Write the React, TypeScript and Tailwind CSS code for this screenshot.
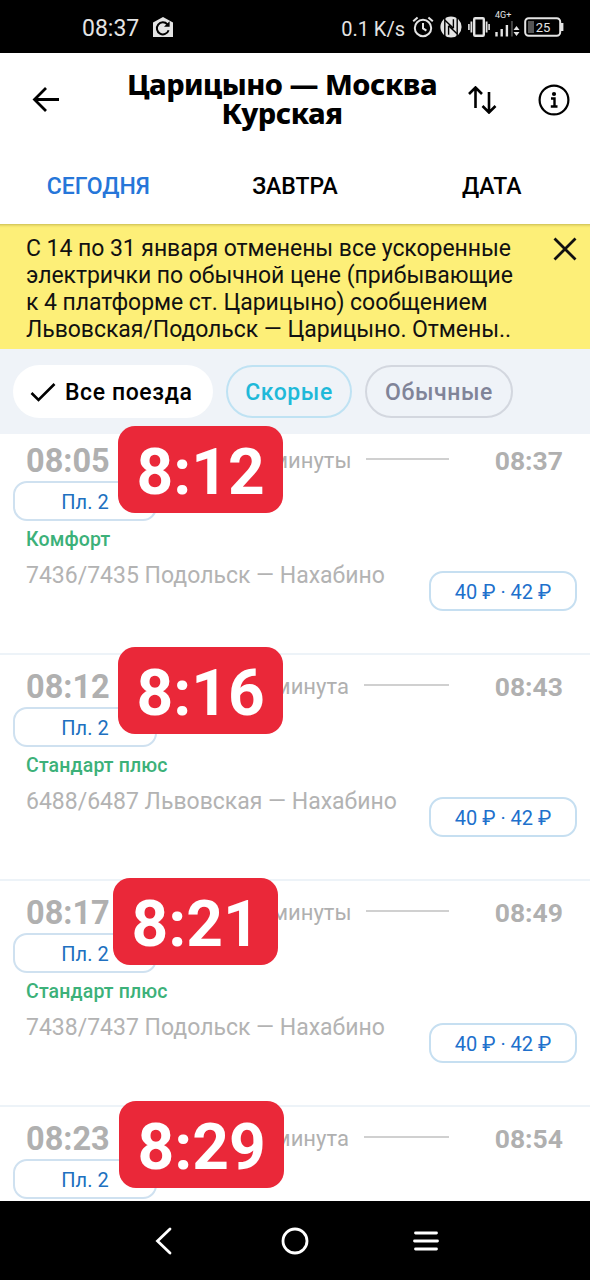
import { useState } from "react";

type Train = {
  departure: string;
  arrival: string;
  duration: string;
  kind?: string;
  route?: string;
  late: string;
  badge: string;
};

const TRAINS: Train[] = [
  {
    departure: "08:05",
    arrival: "08:37",
    duration: "32 минуты",
    kind: "Комфорт",
    route: "7436/7435 Подольск — Нахабино",
    late: "8:12",
    badge: "left-[118px] -top-[3px]",
  },
  {
    departure: "08:12",
    arrival: "08:43",
    duration: "31 минута",
    kind: "Стандарт плюс",
    route: "6488/6487 Львовская — Нахабино",
    late: "8:16",
    badge: "left-[118px] -top-[8px]",
  },
  {
    departure: "08:17",
    arrival: "08:49",
    duration: "32 минуты",
    kind: "Стандарт плюс",
    route: "7438/7437 Подольск — Нахабино",
    late: "8:21",
    badge: "left-[113px] -top-[3px]",
  },
  {
    departure: "08:23",
    arrival: "08:54",
    duration: "31 минута",
    late: "8:29",
    badge: "left-[119px] -top-[6px]",
  },
];

function StatusBar() {
  return (
    <div className="flex h-[53px] shrink-0 items-center bg-black pl-[82px] pr-[26px] text-[#e4e4e4]">
      <span className="w-[70px] pt-[3px] text-[23px] leading-none">08:37</span>
      <svg className="h-[22px] w-[22px]" viewBox="0 0 22 22" fill="none">
        <path d="M1 6.500 11 1l10 5.500V21H1z" fill="#e4e4e4" />
        <path d="M15.400 8.400A6 6 0 1 0 16.600 14.200" stroke="#000" strokeWidth="2" />
        <path d="M17.600 5.200v5.600h-5.600z" fill="#000" />
      </svg>

      <div className="ml-auto flex items-center">
        <span className="mr-[7px] pt-[4px] text-[20px] leading-none">0.1 K/s</span>
        <svg className="h-[22px] w-[22px]" viewBox="0 0 22 22" fill="none" stroke="#e4e4e4" strokeWidth="2">
          <circle cx="11" cy="12" r="8.200" />
          <path d="M11 7v5.400l3.400 2.200M1.200 5.200 5.600 1.400M20.800 5.200l-4.400-3.800" />
        </svg>
        <svg className="ml-[6px] h-[22px] w-[22px]" viewBox="0 0 22 22" fill="none">
          <circle cx="11" cy="11" r="10.600" fill="#e4e4e4" />
          <path d="M4.800 2v18M17.200 2v18" stroke="#000" strokeWidth="1.400" />
          <path d="M8.600 9.800v9M13.400 3.200v9" stroke="#000" strokeWidth="1.400" />
          <path d="m5 4.200 8.400 8M8.600 9.800l8.400 8" stroke="#000" strokeWidth="1.500" />
        </svg>
        <svg className="ml-[6px] h-[22px] w-[22px]" viewBox="0 0 22 22" fill="none" stroke="#e4e4e4">
          <rect x="6.200" y="2.200" width="9.600" height="17.600" rx="1" strokeWidth="2.400" />
          <path d="M3.400 5.500v11M18.600 5.500v11" strokeWidth="1.800" />
          <path d="M.9 8v6M21.100 8v6" strokeWidth="1.600" />
        </svg>
        <div className="ml-[4px] flex h-[30px] w-[28px] flex-col">
          <span className="-mt-[2px] h-[11px] pl-px text-[9px] leading-[11px]">4G+</span>
          <svg className="h-[18px] w-[28px]" viewBox="0 0 28 18">
            <path d="M2.500 11v4.500M7.700 8v7.500M12.900 4v11.500" stroke="#e4e4e4" strokeWidth="2.400" />
            <path d="M17.900 0v15.500" stroke="#444" strokeWidth="2" />
            <path d="m22.500 5 3 4h-6zM22.500 15l3-4h-6z" fill="#e4e4e4" />
          </svg>
        </div>
        <svg className="ml-[2px] h-[20px] w-[40px]" viewBox="0 0 40 20" fill="none">
          <rect x="1.200" y="1.200" width="35" height="17.600" rx="3.500" stroke="#e4e4e4" strokeWidth="2" />
          <path d="M37 6h2.400v8H37z" fill="#e4e4e4" />
          <path d="M4 4h6v12H4z" fill="#555" />
          <text x="19" y="14.500" fontSize="13" textAnchor="middle" fill="#e4e4e4">
            25
          </text>
        </svg>
      </div>
    </div>
  );
}

function Header() {
  return (
    <header className="flex h-[94px] shrink-0 items-center bg-white pl-[32px] pr-[20px] text-black">
      <button aria-label="Назад" className="w-[76px]">
        <svg className="h-[28px] w-[28px]" viewBox="0 0 28 28" fill="none" stroke="currentColor" strokeWidth="2.800">
          <path d="M27 13.500H3M14 2 2.500 13.500 14 25" />
        </svg>
      </button>
      <h1 className="-mt-[5px] w-[348px] whitespace-nowrap text-center font-['Noto_Sans','Open_Sans',sans-serif] text-[29px] font-extrabold leading-[29px] tracking-[-0.5px]">
        <span className="block">Царицыно — Москва</span>
        <span className="block">Курская</span>
      </h1>
      <button aria-label="Поменять направление" className="ml-[11px]">
        <svg className="h-[28px] w-[30px]" viewBox="0 0 30 28" fill="none" stroke="currentColor" strokeWidth="2.600">
          <path d="M8.500 22V2M2 8l6.500-6.500L15 8M22 6v20M15.500 20l6.500 6.500 6.500-6.500" />
        </svg>
      </button>
      <button aria-label="Информация" className="ml-auto">
        <svg className="h-[32px] w-[32px]" viewBox="0 0 32 32" fill="none" stroke="currentColor">
          <circle cx="16" cy="16" r="14.400" strokeWidth="2.200" />
          <circle cx="16" cy="10" r="2.100" fill="currentColor" stroke="none" />
          <path d="M13 14.500h3.500v8M12.800 22.500h6.700" strokeWidth="2.400" />
        </svg>
      </button>
    </header>
  );
}

function Notice({ onClose }: { onClose: () => void }) {
  return (
    <div className="flex h-[125px] shrink-0 justify-between bg-[#fdef78] pl-[26px] pr-[12px] text-[#111] shadow-[inset_0_5px_3px_-4px_rgba(90,80,0,0.35)]">
      <p className="whitespace-nowrap pt-[11px] text-[23px] leading-[27px] tracking-[-0.05px]">
        С 14 по 31 января отменены все ускоренные
        <br />
        электрички по обычной цене (прибывающие
        <br />
        к 4 платформе ст. Царицыно) сообщением
        <br />
        Львовская/Подольск — Царицыно. Отмены..
      </p>
      <button aria-label="Закрыть" onClick={onClose} className="mt-[12px] h-[26px]">
        <svg className="h-[26px] w-[26px]" viewBox="0 0 26 26" stroke="#111" strokeWidth="2.800">
          <path d="m2.500 2.500 21 21M23.500 2.500l-21 21" />
        </svg>
      </button>
    </div>
  );
}

function Filters() {
  return (
    <div className="relative z-10 flex h-[85px] shrink-0 items-start gap-[13px] bg-[#eff3f8] pl-[13px] pt-[16px] text-[23px] font-medium tracking-[0.6px]">
      <button className="flex h-[53px] w-[200px] items-center whitespace-nowrap rounded-full bg-white pl-[17px] text-black">
        <svg className="mr-[9px] h-[20px] w-[26px]" viewBox="0 0 26 20" fill="none" stroke="currentColor" strokeWidth="2.600">
          <path d="m1.500 11 7 7L24.500 2" />
        </svg>
        <span className="pt-[3px]">Все поезда</span>
      </button>
      <button className="h-[53px] w-[126px] rounded-full border-2 border-[#bfe2f3] pt-[3px] text-[#1fb9d9]">Скорые</button>
      <button className="h-[53px] w-[148px] rounded-full border-2 border-[#d3d7df] pt-[3px] text-[#808498]">Обычные</button>
    </div>
  );
}

function TrainRow({ train }: { train: Train }) {
  return (
    <li className="relative h-[226px] border-t-2 border-[#edf3f8] bg-white">
      <div className="flex h-[52px] items-center pl-[26px] pr-[27px] pt-[9px] text-[#b0b0b0]">
        <span className="w-[118px] pt-[3px] text-[32.5px] font-bold">{train.departure}</span>
        <div className="flex w-[305px] items-center gap-[15px]">
          <i className="-mt-[2px] h-[2px] flex-1 bg-[#d0d0d0]" />
          <span className="pt-px text-[22px]">{train.duration}</span>
          <i className="-mt-[2px] h-[2px] flex-1 bg-[#d0d0d0]" />
        </div>
        <span className="ml-auto pt-[3px] text-[26.5px] font-bold">{train.arrival}</span>
      </div>
      <div className="ml-[13px] flex h-[40px] w-[144px] items-center justify-center rounded-[14px] border-2 border-[#cfe1f0] pt-[2px] text-[20px] text-[#2070c0]">
        Пл. 2
      </div>
      {train.route && (
        <div className="flex justify-between pl-[26px] pr-[13px]">
          <div className="whitespace-nowrap">
            <p className="mt-[6px] text-[19.5px] font-medium leading-[26px] tracking-[0.15px] text-[#3cb179]">
              {train.kind}
            </p>
            <p className="mt-[8px] text-[23px] leading-[29px] text-[#b3b3b3]">{train.route}</p>
          </div>
          <button className="mt-[50px] h-[40px] w-[148px] rounded-[14px] border-2 border-[#c6dff1] pt-[2px] text-[20px] leading-none text-[#2070cc]">
            40 ₽ · 42 ₽
          </button>
        </div>
      )}
      {/* real departure time, floats over the row */}
      <div
        className={`absolute z-20 flex h-[87px] w-[165px] items-center justify-center rounded-[17px] bg-[#ea2839] pt-[7px] text-[64px] font-bold leading-none text-white ${train.badge}`}
      >
        {train.late}
      </div>
    </li>
  );
}

function NavBar() {
  return (
    <nav className="relative z-30 flex h-[79px] shrink-0 items-center justify-center gap-[103px] bg-black text-white">
      <svg className="h-[28px] w-[28px]" viewBox="0 0 28 28" fill="none" stroke="currentColor" strokeWidth="2.800" strokeLinecap="round">
        <path d="M20 2 7.500 14 20 26" />
      </svg>
      <svg className="h-[28px] w-[28px]" viewBox="0 0 28 28" fill="none" stroke="currentColor" strokeWidth="2.800">
        <circle cx="14" cy="14" r="12" />
      </svg>
      <svg className="h-[28px] w-[28px]" viewBox="0 0 28 28" fill="none" stroke="currentColor" strokeWidth="2.800" strokeLinecap="round">
        <path d="M3.500 6h21M2.500 14h23M3.500 22h21" />
      </svg>
    </nav>
  );
}

export default function App() {
  const [notice, setNotice] = useState(true);

  return (
    <div className="flex h-[1280px] w-[590px] flex-col overflow-hidden bg-white font-[Roboto,sans-serif]">
      <StatusBar />
      <Header />
      <div className="grid h-[77px] shrink-0 grid-cols-3 text-center text-[23px] font-medium leading-[79px] text-black">
        <button className="text-[#2676d9]">СЕГОДНЯ</button>
        <button>ЗАВТРА</button>
        <button>ДАТА</button>
      </div>
      {notice && <Notice onClose={() => setNotice(false)} />}
      <Filters />
      <ul className="-mt-[7px] min-h-0 flex-1">
        {TRAINS.map((t) => (
          <TrainRow key={t.departure} train={t} />
        ))}
      </ul>
      <NavBar />
    </div>
  );
}
